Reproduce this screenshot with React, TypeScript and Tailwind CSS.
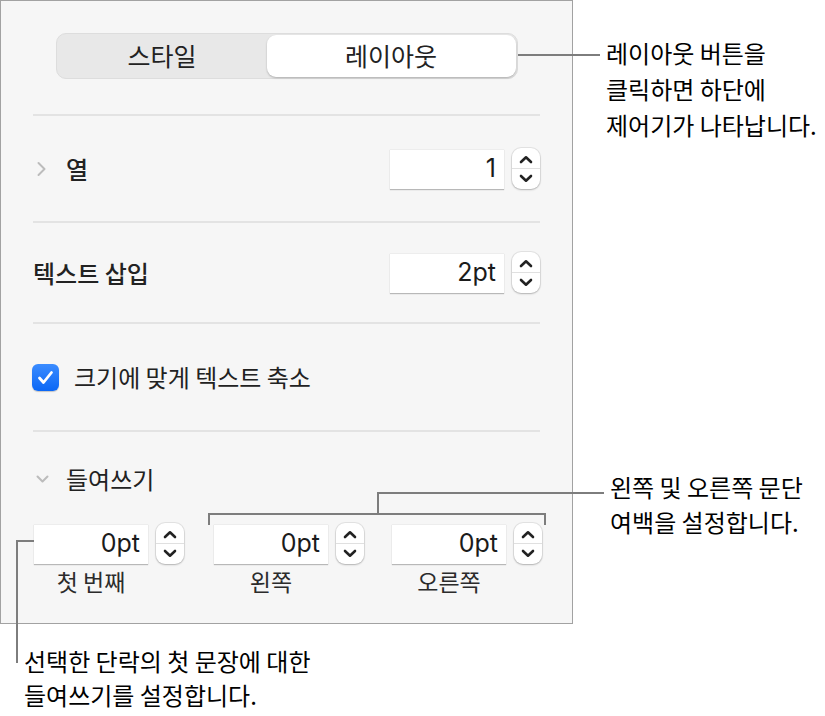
import React from "react";

const KR = "font-['Noto_Sans_CJK_KR',sans-serif]";

const ChevronUpDown = () => (
  <>
    <div className="flex flex-1 items-center justify-center pt-[2px]">
      <svg width="14" height="9" viewBox="0 0 14 9" fill="none">
        <path d="M2 7L7 2.3 12 7" stroke="#222" strokeWidth="2.6" strokeLinecap="round" strokeLinejoin="round" />
      </svg>
    </div>
    <div className="h-px w-full bg-[#e0e0e0]" />
    <div className="flex flex-1 items-center justify-center pb-[2px]">
      <svg width="14" height="9" viewBox="0 0 14 9" fill="none">
        <path d="M2 2L7 6.7 12 2" stroke="#222" strokeWidth="2.6" strokeLinecap="round" strokeLinejoin="round" />
      </svg>
    </div>
  </>
);

const Stepper = () => (
  <div className="flex h-[41px] w-[28px] flex-col rounded-[9px] bg-white shadow-[0_0_0_1px_rgba(0,0,0,0.07),0_1px_2px_rgba(0,0,0,0.22)]">
    <ChevronUpDown />
  </div>
);

const NumberField = ({ value }: { value: string }) => (
  <div className="flex items-center gap-[8px]">
    <div className="flex h-[40px] w-[114px] items-center justify-end border-t border-[#ededed] bg-white pr-[8px] font-['Inter',sans-serif] text-[25px] text-[#1b1b1b] shadow-[0_1px_1px_rgba(0,0,0,0.25)]">
      {value}
    </div>
    <Stepper />
  </div>
);

const Divider = () => <div className="h-[2px] w-full bg-[#e3e3e3]" />;

const ChevronRight = () => (
  <svg width="11" height="16" viewBox="0 0 11 16" fill="none" className="ml-[3px]">
    <path d="M2.5 2l6 6-6 6" stroke="#bcbcbc" strokeWidth="2" strokeLinecap="round" strokeLinejoin="round" />
  </svg>
);

const ChevronDown = () => (
  <svg width="13" height="10" viewBox="0 0 13 10" fill="none" className="ml-[3px]">
    <path d="M1.5 2.5l5 5 5-5" stroke="#bcbcbc" strokeWidth="2" strokeLinecap="round" strokeLinejoin="round" />
  </svg>
);

const Indent = ({ value, label }: { value: string; label: string }) => (
  <div className="flex flex-col">
    <NumberField value={value} />
    <div className="mt-[4px] w-[114px] text-center text-[23px] leading-[26px] text-[#2b2b2b]">{label}</div>
  </div>
);

export default function App() {
  return (
    <div className={`relative h-[716px] w-[825px] bg-white ${KR}`}>
      <div className="flex">
        <div className="flex h-[624px] w-[573px] flex-col border border-[#a2a2a2] bg-[#f6f6f6] px-[32px] pt-[32px]">
          <div className="mx-auto flex h-[46px] w-[462px] rounded-[10px] border border-[#dddddd] bg-[#e8e8e8] p-px">
            <div className="flex w-[209px] items-center justify-center text-[25px] text-[#222]">스타일</div>
            <div className="flex flex-1 items-center justify-center rounded-[9px] bg-white text-[25px] text-[#222] shadow-[0_1px_2px_rgba(0,0,0,0.25)]">
              레이아웃
            </div>
          </div>

          <div className="mt-[35px]">
            <Divider />
          </div>

          <div className="flex h-[105px] items-center justify-between">
            <div className="flex items-center">
              <ChevronRight />
              <span className="ml-[19px] text-[24px] font-medium text-[#222]">열</span>
            </div>
            <NumberField value="1" />
          </div>
          <Divider />

          <div className="flex h-[99px] items-center justify-between">
            <span className="text-[24px] font-medium text-[#222]">텍스트 삽입</span>
            <NumberField value="2pt" />
          </div>
          <Divider />

          <div className="flex h-[106px] items-center">
            <div className="-ml-px flex h-[27px] w-[27px] items-center justify-center rounded-[6px] bg-[linear-gradient(#3b8cff,#0b67f5)] shadow-[0_1px_1px_rgba(0,0,0,0.2)]">
              <svg width="17" height="15" viewBox="0 0 17 15" fill="none">
                <path d="M2.5 8l4 4.5L14.5 2.5" stroke="white" strokeWidth="2.8" strokeLinecap="round" strokeLinejoin="round" />
              </svg>
            </div>
            <span className="ml-[15px] text-[24px] text-[#222]">크기에 맞게 텍스트 축소</span>
          </div>
          <Divider />

          <div className="mt-[32px] flex h-[30px] items-center">
            <ChevronDown />
            <span className="ml-[17px] text-[24px] text-[#222]">들여쓰기</span>
          </div>

          <div className="ml-px mt-[29px] flex">
            <Indent value="0pt" label="첫 번째" />
            <div className="ml-[30px]">
              <Indent value="0pt" label="왼쪽" />
            </div>
            <div className="ml-[28px]">
              <Indent value="0pt" label="오른쪽" />
            </div>
          </div>
        </div>

        <div className="flex flex-col pl-[33px] text-[24px] text-black">
          <p className="mt-[35px] leading-[36px]">
            레이아웃 버튼을
            <br />
            클릭하면 하단에
            <br />
            제어기가 나타납니다.
          </p>
          <p className="ml-[4px] mt-[326px] leading-[35px]">
            왼쪽 및 오른쪽 문단
            <br />
            여백을 설정합니다.
          </p>
        </div>
      </div>

      <p className="ml-[24px] mt-[20px] text-[24px] leading-[34px] text-black">
        선택한 단락의 첫 문장에 대한
        <br />
        들여쓰기를 설정합니다.
      </p>

      {/* leader lines */}
      <div className="absolute left-[518px] top-[54px] h-[2px] w-[82px] bg-[#7d7d7d]" />
      <div className="absolute left-[377px] top-[492px] h-[2px] w-[227px] bg-[#7d7d7d]" />
      <div className="absolute left-[377px] top-[492px] h-[22px] w-[2px] bg-[#7d7d7d]" />
      <div className="absolute left-[208px] top-[513px] h-[2px] w-[338px] bg-[#7d7d7d]" />
      <div className="absolute left-[208px] top-[513px] h-[12px] w-[2px] bg-[#7d7d7d]" />
      <div className="absolute left-[544px] top-[513px] h-[12px] w-[2px] bg-[#7d7d7d]" />
      <div className="absolute left-[16px] top-[540px] h-[2px] w-[18px] bg-[#7d7d7d]" />
      <div className="absolute left-[16px] top-[540px] h-[123px] w-[2px] bg-[#7d7d7d]" />
    </div>
  );
}
